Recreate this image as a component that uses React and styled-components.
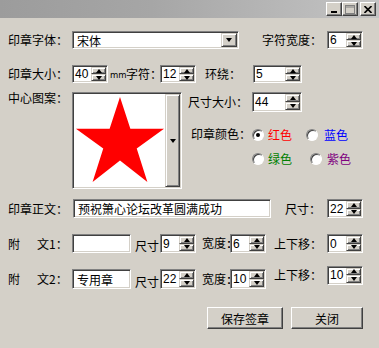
import React from "react";
import styled, { createGlobalStyle } from "styled-components";

const GlobalStyle = createGlobalStyle`
  html, body {
    margin: 0;
    padding: 0;
    background: #d4d0c8;
  }
  body {
    font-family: "Noto Sans CJK SC", "Liberation Sans", sans-serif;
    font-size: 12px;
    color: #000;
  }
`;

function SpinInput({ value, w, h }) {
  return (
    <Sunken w={w} h={h || 18}>
      <FieldText>{value}</FieldText>
      <SpinArrows>
        <ArrowButton>
          <Tri up />
        </ArrowButton>
        <ArrowButton>
          <Tri />
        </ArrowButton>
      </SpinArrows>
    </Sunken>
  );
}

function Radio({ checked, color, text, w, gap }) {
  return (
    <RadioOption w={w}>
      <RadioCircle checked={checked} />
      <RadioText color={color} gap={gap}>{text}</RadioText>
    </RadioOption>
  );
}

function Star() {
  return (
    <svg width="93" height="95" viewBox="73 93 93 95">
      <polygon
        fill="#ff0000"
        points="120,95 130.6,127.4 165,127.5 137.1,147.6 148,182 120,160 92,182 102.9,147.6 75,127.5 109.4,127.4"
      />
    </svg>
  );
}

function App() {
  return (
    <Window>
      <GlobalStyle />
      <TitleBar>
        <CaptionButton>
          <svg width="8" height="8" viewBox="0 0 8 8">
            <rect x="1" y="6" width="6" height="2" fill="#000" />
          </svg>
        </CaptionButton>
        <CaptionButton>
          <svg width="10" height="9" viewBox="0 0 10 9">
            <rect x="0.5" y="0.5" width="9" height="8" fill="none" stroke="#808080" />
            <rect x="0.5" y="1.5" width="9" height="1" fill="#808080" />
          </svg>
        </CaptionButton>
        <CaptionButton ml={2}>
          <svg width="8" height="7" viewBox="0 0 8 7">
            <path d="M0.5 0 L7.5 7 M7.5 0 L0.5 7" stroke="#000" strokeWidth="1.6" />
          </svg>
        </CaptionButton>
      </TitleBar>

      <Body>
        <Row h={18} mt={13}>
          <Label w={64}>印章字体：</Label>
          <Sunken w={167} h={18}>
            <FieldText cjk>宋体</FieldText>
            <DropButton>
              <Tri />
            </DropButton>
          </Sunken>
          <Label w={65} ml={23}>字符宽度：</Label>
          <SpinInput w={36} value="6" />
        </Row>

        <Row h={18} mt={16}>
          <Label w={64}>印章大小：</Label>
          <SpinInput w={36} value="40" />
          <Unit>mm</Unit>
          <Label w={34}>字符：</Label>
          <SpinInput w={36} value="12" />
          <Label w={48} ml={9}>环绕：</Label>
          <SpinInput w={49} value="5" />
        </Row>

        <CenterRow>
          <Label w={64} top>中心图案：</Label>
          <PictureBox>
            <Canvas>
              <Star />
            </Canvas>
            <DropColumn>
              <Tri />
            </DropColumn>
          </PictureBox>
          <SideColumn>
            <Row h={20}>
              <Label w={64}>尺寸大小：</Label>
              <SpinInput w={50} h={20} value="44" />
            </Row>
            <ColorRow>
              <Label w={61} ml={3}>印章颜色：</Label>
              <RadioGrid>
                <RadioLine>
                  <Radio checked w={54} gap={4} color="#ff0000" text="红色" />
                  <Radio gap={6} color="#0000ff" text="蓝色" />
                </RadioLine>
                <RadioLine>
                  <Radio w={58} gap={4} color="#008000" text="绿色" />
                  <Radio gap={5} color="#800080" text="紫色" />
                </RadioLine>
              </RadioGrid>
            </ColorRow>
          </SideColumn>
        </CenterRow>

        <Row h={19} mt={10}>
          <Label w={65}>印章正文：</Label>
          <Sunken w={198} h={19}>
            <FieldText cjk>预祝箫心论坛改革圆满成功</FieldText>
          </Sunken>
          <Label w={42} ml={14}>尺寸：</Label>
          <SpinInput w={36} h={19} value="22" />
        </Row>

        <Row h={19} mt={16}>
          <Label w={29}>附</Label>
          <Label w={35}>文1：</Label>
          <Sunken w={59} h={19} />
          <Label w={25} ml={4} low>尺寸</Label>
          <SpinInput w={36} h={19} value="9" />
          <Label w={28} ml={6}>宽度<Colon>:</Colon></Label>
          <SpinInput w={36} h={19} value="6" />
          <Label w={53} ml={8}>上下移：</Label>
          <SpinInput w={36} h={19} value="0" />
        </Row>

        <Row h={20} mt={16}>
          <Label w={29}>附</Label>
          <Label w={35}>文2：</Label>
          <Sunken w={59} h={20}>
            <FieldText cjk>专用章</FieldText>
          </Sunken>
          <Label w={25} ml={4} low>尺寸</Label>
          <SpinInput w={36} h={20} value="22" />
          <Label w={28} ml={6}>宽度<Colon>:</Colon></Label>
          <SpinInput w={36} h={20} value="10" />
          <Raised>
            <Label w={53} ml={8}>上下移：</Label>
            <SpinInput w={36} h={19} value="10" />
          </Raised>
        </Row>

        <ButtonRow>
          <Button w={76}>保存签章</Button>
          <Button w={72} ml={8}>关闭</Button>
        </ButtonRow>
      </Body>
    </Window>
  );
}

export default App;

const Window = styled.div`
  width: 379px;
  height: 348px;
  overflow: hidden;
  background: #d4d0c8;
`;

const TitleBar = styled.div`
  height: 18px;
  display: flex;
  justify-content: flex-end;
  align-items: center;
  padding-right: 3px;
  background: linear-gradient(90deg, #9c9c9c 0%, #a6a6a6 40%, #c4c4c4 100%);
`;

const CaptionButton = styled.div`
  width: 16px;
  height: 14px;
  box-sizing: border-box;
  margin-left: ${(p) => p.ml || 0}px;
  display: flex;
  align-items: center;
  justify-content: center;
  background: #d4d0c8;
  border: 1px solid;
  border-color: #ffffff #404040 #404040 #ffffff;
  box-shadow: inset -1px -1px #808080;
`;

const Body = styled.div`
  display: flex;
  flex-direction: column;
  padding-left: 8px;
`;

const Row = styled.div`
  display: flex;
  align-items: center;
  height: ${(p) => p.h}px;
  margin-top: ${(p) => p.mt || 0}px;
`;

const Label = styled.span`
  flex: none;
  width: ${(p) => p.w}px;
  margin-left: ${(p) => p.ml || 0}px;
  white-space: nowrap;
  line-height: 12px;
  font-size: 12px;
  align-self: ${(p) => (p.top ? "flex-start" : "auto")};
  margin-top: ${(p) => (p.low ? 5 : 0)}px;
`;

const Colon = styled.span`
  margin-left: 1px;
  font-family: "Liberation Sans", sans-serif;
  font-weight: bold;
`;

const Unit = styled.span`
  flex: none;
  width: 16px;
  margin-left: 2px;
  font-family: "DejaVu Sans", sans-serif;
  font-size: 8.5px;
  padding-top: 2px;
`;

const Sunken = styled.div`
  flex: none;
  width: ${(p) => p.w}px;
  height: ${(p) => p.h}px;
  box-sizing: border-box;
  display: flex;
  align-items: stretch;
  background: #ffffff;
  border: 1px solid;
  border-color: #808080 #ffffff #ffffff #808080;
  box-shadow: inset 1px 1px #404040, inset -1px -1px #d4d0c8;
  padding: 1px;
`;

const FieldText = styled.span`
  flex: 1;
  display: flex;
  align-items: center;
  padding-left: ${(p) => (p.cjk ? 3 : 1)}px;
  font-family: ${(p) =>
    p.cjk
      ? `"Noto Sans CJK SC", sans-serif`
      : `"Liberation Sans", "DejaVu Sans", sans-serif`};
  font-size: 12px;
  white-space: nowrap;
  overflow: hidden;
`;

const SpinArrows = styled.div`
  width: 15px;
  display: flex;
  flex-direction: column;
`;

const ArrowButton = styled.div`
  flex: 1;
  box-sizing: border-box;
  display: flex;
  align-items: center;
  justify-content: center;
  background: #d4d0c8;
  border: 1px solid;
  border-color: #d4d0c8 #404040 #404040 #d4d0c8;
  box-shadow: inset 1px 1px #ffffff, inset -1px -1px #808080;
`;

const Tri = styled.span`
  width: 0;
  height: 0;
  border-left: 3.5px solid transparent;
  border-right: 3.5px solid transparent;
  ${(p) =>
    p.up
      ? "border-bottom: 4px solid #000;"
      : "border-top: 4px solid #000;"}
`;

const DropButton = styled(ArrowButton)`
  flex: none;
  width: 16px;
`;

const CenterRow = styled.div`
  display: flex;
  align-items: flex-start;
  margin-top: 9px;
`;

const PictureBox = styled(Sunken).attrs({ w: 110, h: 97 })``;

const Canvas = styled.div`
  flex: 1;
  overflow: hidden;
  display: flex;
  background: #ffffff;
`;

const DropColumn = styled(ArrowButton)`
  flex: none;
  width: 15px;
`;

const SideColumn = styled.div`
  display: flex;
  flex-direction: column;
  margin-left: 6px;
`;

const ColorRow = styled.div`
  display: flex;
  align-items: flex-start;
  margin-top: 16px;
`;

const RadioGrid = styled.div`
  display: flex;
  flex-direction: column;
  gap: 10px;
`;

const RadioLine = styled.div`
  display: flex;
  align-items: center;
  height: 14px;
`;

const RadioOption = styled.div`
  display: flex;
  align-items: center;
  width: ${(p) => (p.w ? `${p.w}px` : "auto")};
`;

const RadioCircle = styled.span`
  flex: none;
  width: 12px;
  height: 12px;
  box-sizing: border-box;
  border-radius: 50%;
  background: #ffffff;
  border: 1px solid;
  border-color: #808080 #ffffff #ffffff #808080;
  box-shadow: inset 1px 1px #404040;
  display: flex;
  align-items: center;
  justify-content: center;

  &::after {
    content: "";
    width: 4px;
    height: 4px;
    border-radius: 50%;
    background: ${(p) => (p.checked ? "#000" : "transparent")};
  }
`;

const RadioText = styled.span`
  margin-left: ${(p) => p.gap}px;
  color: ${(p) => p.color};
  font-size: 12px;
  line-height: 12px;
`;

const Raised = styled.div`
  display: flex;
  align-items: center;
  margin-bottom: 8px;
`;

const ButtonRow = styled.div`
  display: flex;
  margin-top: 18px;
  padding-left: 199px;
`;

const Button = styled.button`
  width: ${(p) => p.w}px;
  height: 22px;
  margin-left: ${(p) => p.ml || 0}px;
  padding: 0;
  font-family: "Noto Sans CJK SC", sans-serif;
  font-size: 12px;
  color: #000;
  background: #d4d0c8;
  border: 1px solid;
  border-color: #ffffff #404040 #404040 #ffffff;
  box-shadow: inset -1px -1px #808080;
  outline: none;
`;
